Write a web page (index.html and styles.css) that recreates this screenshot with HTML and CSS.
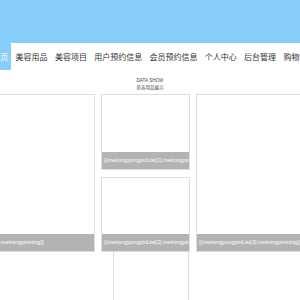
FILE: index.html
```html
<!DOCTYPE html>
<html lang="zh">
<head>
    <meta charset="UTF-8">
    <meta name="viewport" content="width=device-width, initial-scale=1.0">
    <title>美容用品</title>
    <link rel="stylesheet" href="styles.css">
</head>
<body>
    <div class="header"></div>

    <div class="nav">
        <a class="nav-item active">首页</a>
        <a class="nav-item">美容用品</a>
        <a class="nav-item">美容项目</a>
        <a class="nav-item">用户预约信息</a>
        <a class="nav-item">会员预约信息</a>
        <a class="nav-item">个人中心</a>
        <a class="nav-item">后台管理</a>
        <a class="nav-item">购物车</a>
    </div>

    <div class="section-title">
        <div class="title-en">DATA SHOW</div>
        <div class="title-cn">美容用品展示</div>
    </div>

    <div class="cards">
        <div class="card card-big">
            <div class="pic"></div>
            <div class="label">{{meirongyongpinList[0].meirongpinming}}</div>
        </div>
        <div class="col">
            <div class="card card-small">
                <div class="pic"></div>
                <div class="label">{{meirongyongpinList[1].meirongpinming}}</div>
            </div>
            <div class="card card-small">
                <div class="pic"></div>
                <div class="label">{{meirongyongpinList[2].meirongpinming}}</div>
            </div>
        </div>
        <div class="card card-big">
            <div class="pic"></div>
            <div class="label">{{meirongyongpinList[3].meirongpinming}}</div>
        </div>
    </div>

    <div class="more-box"></div>
</body>
</html>
```

FILE: styles.css
```css
body {
    margin: 0;
    font-family: "Noto Sans CJK SC", "Liberation Sans", sans-serif;
    background: #fff;
    overflow: hidden;
}
.header {
    height: 43px;
    background-color: #87cefa;
}
.nav {
    display: flex;
    gap: 1.3px;
    height: 27px;
    margin-left: -10.7px;
    background: #fff;
    white-space: nowrap;
}
.nav-item {
    display: flex;
    align-items: center;
    padding: 0 3px;
    font-size: 8px;
    color: #333;
    flex-shrink: 0;
}
.nav-item.active {
    background-color: #87cefa;
    color: #fff;
}
.section-title {
    padding-top: 8px;
    text-align: center;
    color: #444;
}
.title-en {
    font-family: "Liberation Sans", sans-serif;
    font-size: 4.6px;
    line-height: 6px;
}
.title-cn {
    font-size: 4.6px;
    line-height: 6.5px;
}
.cards {
    display: flex;
    gap: 6px;
    margin-top: 3.5px;
    margin-left: -61px;
}
.col {
    display: flex;
    flex-direction: column;
    gap: 7px;
    width: 89px;
    flex-shrink: 0;
}
.card {
    display: flex;
    flex-direction: column;
    border: 1px solid #ddd;
    box-sizing: border-box;
    background: #fff;
    flex-shrink: 0;
}
.card-big {
    width: 156px;
    height: 158px;
}
.card-small {
    height: 75.5px;
}
.pic {
    flex: 1;
}
.label {
    height: 17px;
    line-height: 17px;
    padding: 0 2px;
    background-color: #b3b3b3;
    color: #fff;
    font-family: "Liberation Sans", sans-serif;
    font-size: 5.5px;
    white-space: nowrap;
    overflow: hidden;
}
.more-box {
    width: 76px;
    height: 60px;
    margin-left: 113px;
    border: 1px solid #ddd;
    border-top: none;
    box-sizing: border-box;
}
```
